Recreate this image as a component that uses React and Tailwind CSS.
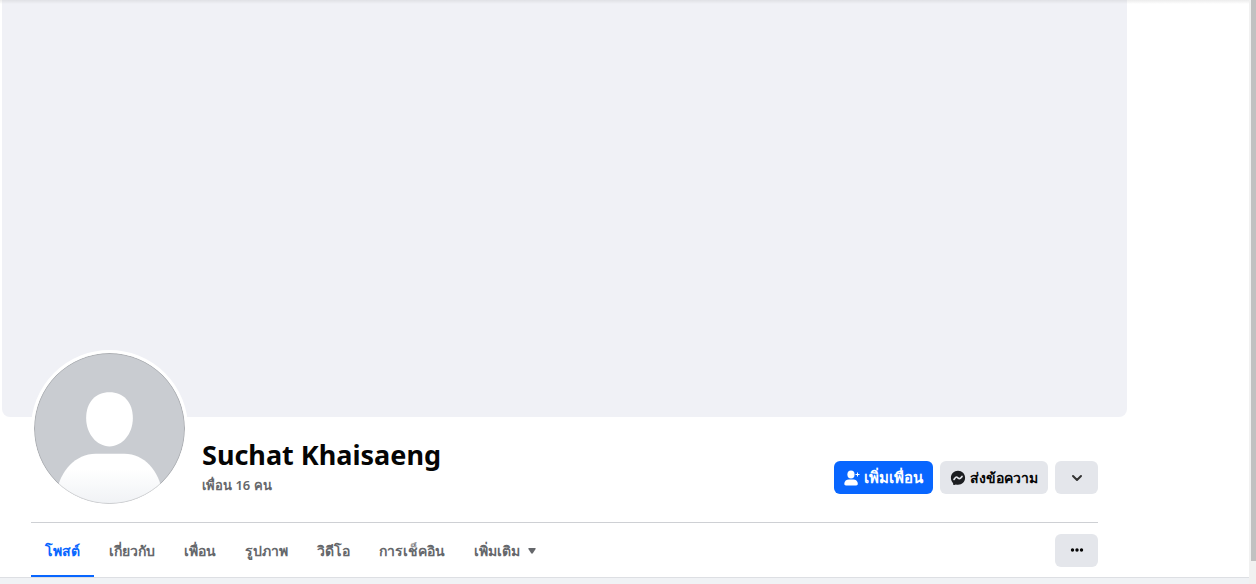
import React, { useState } from "react";
import clsx from "clsx";

const tabs = [
  "โพสต์",
  "เกี่ยวกับ",
  "เพื่อน",
  "รูปภาพ",
  "วิดีโอ",
  "การเช็คอิน",
];

function Avatar() {
  return (
    <svg
      viewBox="0 0 152 152"
      className="w-[157px] h-[157px] shrink-0 -mt-[67px] rounded-full border-[3px] border-white bg-white"
      role="img"
      aria-label="Suchat Khaisaeng"
    >
      <defs>
        <clipPath id="avatar-circle">
          <circle cx="76" cy="76" r="76" />
        </clipPath>
        <linearGradient id="avatar-body" x1="0" y1="0" x2="0" y2="1">
          <stop offset="0.3" stopColor="#ffffff" />
          <stop offset="1" stopColor="#f0f2f5" />
        </linearGradient>
      </defs>
      <g clipPath="url(#avatar-circle)">
        <rect width="152" height="152" fill="#c9ccd1" />
        <path
          d="M76 39.500c14 0 23.500 10 23.500 26S89 94 76 94 52.500 81.500 52.500 65.500 62 39.500 76 39.500Z"
          fill="#fff"
        />
        <path
          d="M23 140C26 119 42 101.500 62 101.500h29c20 0 35 17.500 38 38.500v12H23Z"
          fill="url(#avatar-body)"
        />
      </g>
      <circle cx="76" cy="76" r="75.500" fill="none" stroke="#000" strokeOpacity="0.15" />
    </svg>
  );
}

function AddFriendIcon() {
  return (
    <svg viewBox="0 0 16 16" className="w-4 h-4" fill="currentColor" aria-hidden="true">
      <ellipse cx="7" cy="4.500" rx="3.600" ry="4" />
      <path d="M.3 13.800C.3 11 2.500 9.500 5 9.500h4c2.500 0 4.800 1.500 4.800 4.300 0 1-.6 1.700-1.600 1.700H1.900C.9 15.500.3 14.800.3 13.800Z" />
      <path d="M13.500 2.500v4M11.500 4.500h4" stroke="currentColor" strokeWidth="1" />
    </svg>
  );
}

function MessengerIcon() {
  return (
    <svg viewBox="0 0 16 16" className="w-4 h-4" aria-hidden="true">
      <path
        d="M8 .8C4 .8.9 3.800.9 7.800c0 2 .7 3.800 2 5.100.3.300.3.700.3 1.300 0 .7.500 1 1.100.8l1.600-.6c.7.200 1.400.300 2.100.3 4.100 0 7.100-2.900 7.100-6.900S12 .8 8 .8Z"
        fill="#1c1e21"
      />
      <path
        d="M4 9.400c.8-1 1.500-2.400 2.500-2.400s1.800 1.700 2.900 1.700S11.200 7.500 12 6.500"
        fill="none"
        stroke="#e4e6eb"
        strokeWidth="1.700"
        strokeLinecap="round"
        strokeLinejoin="round"
      />
    </svg>
  );
}

export default function App() {
  const [active, setActive] = useState(0);

  return (
    <div className="flex min-h-screen bg-[#f0f2f5] font-['Noto_Sans','Open_Sans',sans-serif]">
      <main className="flex-1 min-w-0">
        <section className="bg-white border-b border-[#dddfe3]">
          {/* Shadow of the top bar, then the empty cover */}
          <div className="pl-[2px] bg-linear-to-b from-[#ececec] to-white to-[4px]">
            <div className="h-[417px] max-w-[1125px] rounded-b-lg bg-linear-to-b from-[#e0e1e5] to-[#f0f1f6] to-[4px]" />
          </div>

          <div className="max-w-[1129px] px-[31px]">
            <header className="flex items-start h-[105px]">
              <Avatar />
              <div className="ml-[14px] mt-[18px] flex-1">
                <h1 className="text-[27px] leading-[40px] font-bold text-[#050505]">
                  Suchat Khaisaeng
                </h1>
                <a href="#friends" className="block text-[13px] leading-[21px] font-semibold text-[#65676b]">
                  เพื่อน 16 คน
                </a>
              </div>
              <div className="flex gap-[7px] mt-[44px] text-sm font-bold">
                <button
                  type="button"
                  className="flex items-center justify-center gap-1 h-[33px] w-[99px] rounded-md bg-[#0866ff] text-[15px] text-white"
                >
                  <AddFriendIcon />
                  เพิ่มเพื่อน
                </button>
                <button
                  type="button"
                  className="flex items-center justify-center gap-1 h-[33px] w-[108px] rounded-md bg-[#e4e6eb] text-[#050505]"
                >
                  <MessengerIcon />
                  ส่งข้อความ
                </button>
                <button
                  type="button"
                  aria-label="ดูตัวเลือก"
                  className="flex items-center justify-center h-[33px] w-[43px] rounded-md bg-[#e4e6eb] text-[#333]"
                >
                  <svg viewBox="0 0 12 12" className="w-3 h-3" fill="none" aria-hidden="true">
                    <path
                      d="m2 4 4 4 4-4"
                      stroke="currentColor"
                      strokeWidth="2"
                      strokeLinecap="round"
                      strokeLinejoin="round"
                    />
                  </svg>
                </button>
              </div>
            </header>

            <div className="flex items-center justify-between h-[55px] border-t border-[#ced0d4]">
              <nav className="flex gap-px h-full text-sm font-bold text-[#65676b]">
                {tabs.map((tab, i) => (
                  <button
                    key={tab}
                    type="button"
                    onClick={() => setActive(i)}
                    className={clsx(
                      "px-[14px] pt-[3px] border-b-2",
                      i === active ? "border-[#0866ff] text-[#0866ff]" : "border-transparent"
                    )}
                  >
                    {tab}
                  </button>
                ))}
                <button type="button" className="flex items-center gap-2 px-[14px] pt-[3px] border-b-2 border-transparent">
                  เพิ่มเติม
                  <svg viewBox="0 0 8 6" className="w-2 h-[6px]" fill="currentColor" aria-hidden="true">
                    <path d="M1 0h6q1 0 .6 1L5 5Q4 6.500 3 5L.4 1Q0 0 1 0Z" />
                  </svg>
                </button>
              </nav>
              <button
                type="button"
                aria-label="เพิ่มเติม"
                className="flex items-center justify-center h-[33px] w-[43px] rounded-md bg-[#e4e6eb] text-[#050505]"
              >
                <svg viewBox="0 0 14 4" className="w-[14px] h-1" fill="currentColor" aria-hidden="true">
                  <circle cx="2.500" cy="2" r="1.700" />
                  <circle cx="7" cy="2" r="1.700" />
                  <circle cx="11.500" cy="2" r="1.700" />
                </svg>
              </button>
            </div>
          </div>
        </section>
      </main>

      {/* Scroll track */}
      <div className="w-[7px] h-screen pl-[2px] bg-[#f1f1f1]" aria-hidden="true">
        <div className="h-[96%] bg-[#c1c1c1]" />
      </div>
    </div>
  );
}
